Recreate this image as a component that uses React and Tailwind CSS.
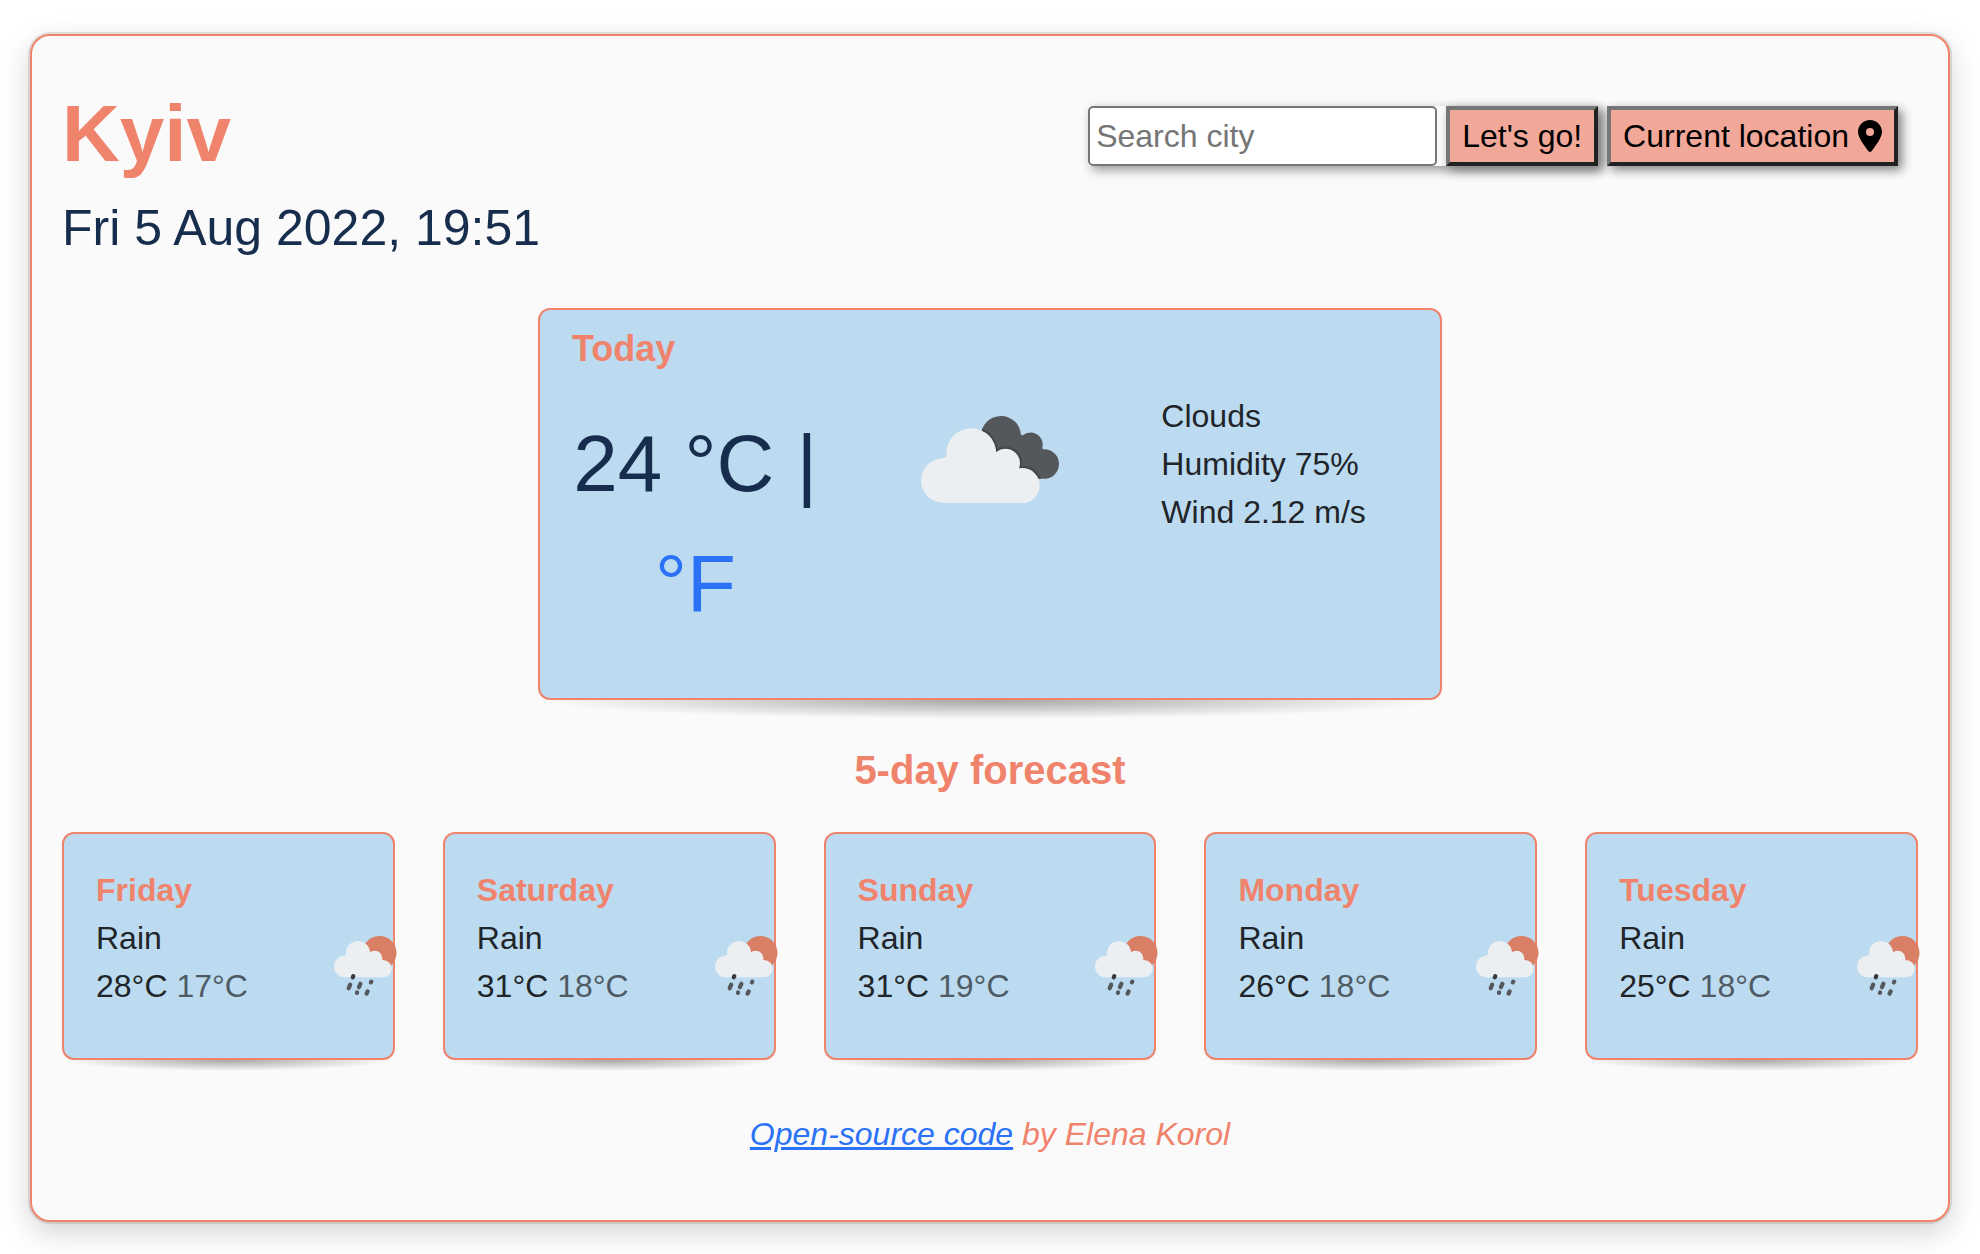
import React from "react";
import { FaLocationDot } from "react-icons/fa6";

const forecast = [
  { day: "Friday", text: "Rain", max: 28, min: 17 },
  { day: "Saturday", text: "Rain", max: 31, min: 18 },
  { day: "Sunday", text: "Rain", max: 31, min: 19 },
  { day: "Monday", text: "Rain", max: 26, min: 18 },
  { day: "Tuesday", text: "Rain", max: 25, min: 18 },
];

function CloudsIcon() {
  return (
    <svg className="h-[87px] w-[138px]" viewBox="0 0 138 87" role="img" aria-label="Clouds">
      <defs>
        <clipPath id="dark-cloud">
          <circle cx="80" cy="20" r="20" />
          <circle cx="109.5" cy="28.7" r="12.2" />
          <circle cx="123.3" cy="48" r="14.7" />
          <path d="M60 20 L80 40 L100 62 L123 62.7 L123 34 L109 20 L99 19Z" />
        </clipPath>
      </defs>
      <g clipPath="url(#dark-cloud)">
        <rect width="138" height="87" fill="#54575c" />
        <g fill="#4a4c51">
          <circle cx="50.3" cy="37.3" r="27.5" />
          <circle cx="84.5" cy="47.2" r="17" />
          <circle cx="101.3" cy="69.5" r="20" />
        </g>
        <g fill="#3c3e42">
          <circle cx="50.3" cy="37.3" r="26" />
          <circle cx="84.5" cy="47.2" r="15.5" />
          <circle cx="101.3" cy="69.5" r="18.5" />
        </g>
      </g>
      <g fill="#eceff1">
        <circle cx="22.3" cy="64.5" r="22.3" />
        <circle cx="50.3" cy="37.3" r="25" />
        <circle cx="84.5" cy="47.2" r="14.5" />
        <circle cx="101.3" cy="69.5" r="17.5" />
        <path d="M22 42.2 L50 30 L74 38 L84 42 L101 56 V87 H22Z" />
      </g>
    </svg>
  );
}

function RainIcon() {
  return (
    <svg className="h-[60px] w-[63px] shrink-0" viewBox="0 0 63 60" role="img" aria-label="Rain">
      <circle cx="45.5" cy="17" r="17" fill="#d97f66" />
      <g fill="#eceff1">
        <circle cx="10.8" cy="30.5" r="10.8" />
        <circle cx="24" cy="17" r="12" />
        <circle cx="40.7" cy="22.5" r="7.7" />
        <circle cx="49" cy="32.6" r="8.7" />
        <path d="M10 19.7 L24 14 L36 18 L41 20 L49 26 V41.3 H10.8Z" />
      </g>
      <g stroke="#54575c" strokeWidth="4.2" strokeLinecap="round">
        <path d="M19.3 40.1 L18.8 41.3" stroke="#38393d" />
        <path d="M16.2 48.7 L14.7 52.2" />
        <path d="M26.4 47.8 L24.9 51.2" />
        <path d="M23.1 56.5 L22.9 56.9" />
        <path d="M33.6 55.4 L32.6 57.6" />
        <path d="M37.3 45.6 L36.9 46.4" />
      </g>
    </svg>
  );
}

function Card({ className = "", children }) {
  return (
    <section className={"relative rounded-xl border-2 border-[#f0836c] bg-[#bcdbf0] px-8 " + className}>
      {children}
      <div className="absolute inset-x-0 top-full mt-0.5 h-[5%] bg-[radial-gradient(50%_100%_at_50%_0,#a6a6a6,transparent)]" />
    </section>
  );
}

const buttonClass =
  "flex h-[60px] items-center gap-[9px] border-4 border-t-[#767676] border-l-[#767676] border-r-[#212121] border-b-[#212121] bg-[#f2a898] px-3 whitespace-nowrap text-black shadow-[4px_4px_10px_gray]";

export default function App() {
  return (
    <div className="px-[30px] pt-[34px] pb-8 font-['Liberation_Sans',Arial,sans-serif] text-[32px] leading-[48px] text-[#212529]">
      <main className="rounded-[20px] border-2 border-[#f0836c] bg-[#fafafa] px-[30px] pt-[50px] pb-[62px] shadow-[0_0_0_2px_rgba(0,0,0,0.1),0_10px_30px_rgba(0,0,0,0.18)]">
        <header className="flex items-start justify-between">
          <div>
            <h1 className="text-[80px] leading-[96px] font-bold text-[#f0836c]">Kyiv</h1>
            <p className="mt-4 text-[50px] leading-[60px] text-[#172d4d]">Fri 5 Aug 2022, 19:51</p>
          </div>
          <div className="mt-5 mr-5 flex gap-[9px]">
            <form className="flex gap-[9px] shadow-[4px_4px_10px_rgba(0,0,0,0.4)]" onSubmit={(e) => e.preventDefault()}>
              <input
                type="search"
                aria-label="Search city"
                placeholder="Search city"
                className="h-[60px] w-[349px] rounded-[5px] border-2 border-[#767676] bg-white px-1.5 placeholder:text-[#757575]"
              />
              <button type="submit" className={buttonClass}>Let's go!</button>
            </form>
            <button type="button" className={buttonClass}>
              Current location
              <FaLocationDot className="h-8 w-6" />
            </button>
          </div>
        </header>

        <Card className="mx-auto mt-[50px] w-[calc(50%-24px)] pt-[18px] pb-[54px]">
          <h2 className="text-[36px] leading-[42px] font-bold text-[#f0836c]">Today</h2>
          <div className="mt-[22px] grid grid-cols-3 gap-12">
            <p className="mt-3 text-center text-[80px] leading-[120px] text-[#172d4d]">
              24 °C | <a href="#fahrenheit" className="text-[#2b72f7]">°F</a>
            </p>
            <div className="mt-6 flex justify-center">
              <CloudsIcon />
            </div>
            <ul>
              <li>Clouds</li>
              <li>Humidity 75%</li>
              <li>Wind 2.12 m/s</li>
            </ul>
          </div>
        </Card>

        <h2 className="mt-[46px] text-center text-[40px] leading-[48px] font-bold text-[#f0836c]">5-day forecast</h2>

        <div className="mt-[38px] grid grid-cols-5 gap-12">
          {forecast.map((f) => (
            <Card key={f.day} className="pt-8 pb-12">
              <h3 className="font-bold text-[#f0836c]">{f.day}</h3>
              <div className="flex justify-between">
                <div className="whitespace-nowrap">
                  <p>{f.text}</p>
                  <p>
                    {f.max}°C <span className="opacity-70">{f.min}°C</span>
                  </p>
                </div>
                <div className="-mr-9 pt-[22px]">
                  <RainIcon />
                </div>
              </div>
            </Card>
          ))}
        </div>

        <footer className="mt-[50px] text-center text-[#f0836c] italic">
          <a href="#source" className="text-[#2b72f7] underline">Open-source code</a> by Elena Korol
        </footer>
      </main>
    </div>
  );
}
